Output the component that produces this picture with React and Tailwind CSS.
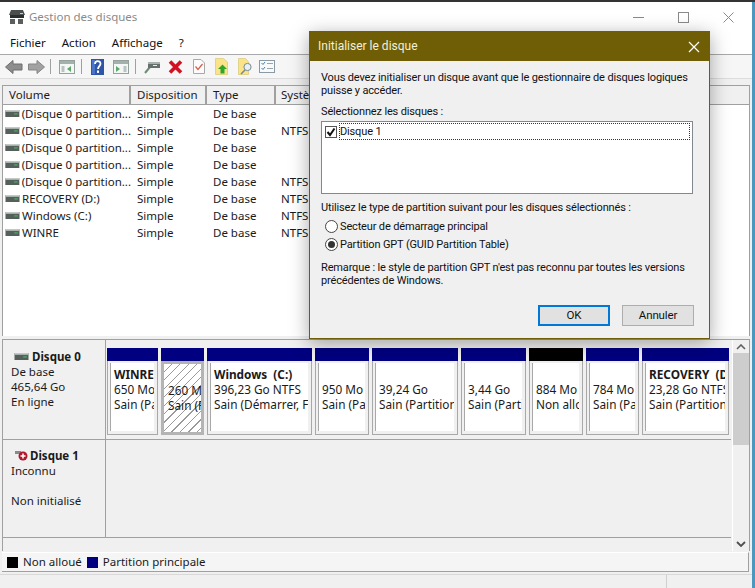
const rows = [
  ["(Disque 0 partition...", ""],
  ["(Disque 0 partition...", "NTFS"],
  ["(Disque 0 partition...", ""],
  ["(Disque 0 partition...", ""],
  ["(Disque 0 partition...", "NTFS"],
  ["RECOVERY (D:)", "NTFS"],
  ["Windows (C:)", "NTFS"],
  ["WINRE", "NTFS"],
];

const partitions = [
  { w: "w-[51px]", name: "WINRE", size: "650 Mo", state: "Sain (Pa" },
  { w: "w-[43px]", size: "260 Mo", state: "Sain (P", hatch: true },
  { w: "w-[105px]", name: "Windows  (C:)", size: "396,23 Go NTFS", state: "Sain (Démarrer, Fi" },
  { w: "w-[54px]", size: "950 Mo", state: "Sain (Pa" },
  { w: "w-[86px]", size: "39,24 Go", state: "Sain (Partition" },
  { w: "w-[65px]", size: "3,44 Go", state: "Sain (Parti" },
  { w: "w-[54px]", size: "884 Mo", state: "Non allo", black: true },
  { w: "w-[53px]", size: "784 Mo", state: "Sain (Pa" },
  { w: "w-[87px]", name: "RECOVERY  (D", size: "23,28 Go NTFS", state: "Sain (Partition" },
];

function DiskIcon({ className = "" }) {
  return (
    <svg width="15" height="7" viewBox="0 0 16 8" className={className}>
      <rect x="0" y="0" width="16" height="8" fill="#55605c" />
      <rect x="0" y="0" width="16" height="2" fill="#c4cac7" />
      <rect x="10" y="4" width="4" height="1" fill="#46d060" />
    </svg>
  );
}

function Toolbar() {
  return (
    <>
      <div className="h-[24px] flex items-center border-t border-[#a9a9a9] bg-[#f6f6f6] shrink-0">
        <svg width="40" height="16" viewBox="0 0 40 16" className="ml-[5px]">
          <path d="M0.5 8 L8 1.5 V5 H17 V11 H8 V14.5 Z" fill="#8d8d8d" stroke="#6d6d6d" />
          <path d="M39.5 8 L32 1.5 V5 H23.5 V11 H32 V14.5 Z" fill="#a2a2a2" stroke="#858585" />
        </svg>
        <div className="w-px h-[15px] bg-[#a0a0a0] ml-[5px]" />
        <svg width="16" height="14" viewBox="0 0 16 14" className="ml-[8px]">
          <rect x="0.5" y="0.5" width="15" height="13" fill="#f4f7f5" stroke="#93a09b" />
          <rect x="1" y="1" width="14" height="3" fill="#a4b0ab" />
          <path d="M2.5 6h3v6h-3z" fill="#b8c4c0" />
          <path d="M12 6v6l-4-3z" fill="#5aa86a" />
        </svg>
        <div className="w-px h-[15px] bg-[#a0a0a0] ml-[6px]" />
        <svg width="13" height="16" viewBox="0 0 13 16" className="ml-[9px]">
          <rect width="13" height="16" fill="#2f55a8" />
          <rect x="1" y="1" width="3" height="14" fill="#4a74c8" />
          <path d="M4 5 C4 1.2 9.5 1.2 9.5 4.8 C9.5 7 7 7.4 7 10" fill="none" stroke="#fff" strokeWidth="1.8" />
          <rect x="6" y="11.5" width="2" height="2.4" fill="#fff" />
        </svg>
        <svg width="16" height="14" viewBox="0 0 16 14" className="ml-[9px]">
          <rect x="0.5" y="0.5" width="15" height="13" fill="#f4f7f5" stroke="#93a09b" />
          <rect x="1" y="1" width="14" height="3" fill="#a4b0ab" />
          <path d="M3 6v6l4-3z" fill="#5aa86a" />
          <path d="M10.5 6h3v6h-3z" fill="#b8c4c0" />
        </svg>
        <div className="w-px h-[15px] bg-[#a0a0a0] ml-[6px]" />
        <svg width="16" height="15" viewBox="0 0 16 15" className="ml-[8px]">
          <path d="M1 14 L6 8" stroke="#6f8c78" strokeWidth="2" />
          <rect x="4" y="3" width="12" height="6" fill="#66706c" />
          <rect x="4" y="3" width="12" height="2" fill="#a9b3af" />
          <rect x="9" y="6" width="4" height="1" fill="#e8f0ec" />
        </svg>
        <svg width="15" height="14" viewBox="0 0 15 14" className="ml-[8px]">
          <path d="M2 1.5 L13 12.5 M13 1.5 L2 12.5" stroke="#cf1322" strokeWidth="3.6" />
        </svg>
        <svg width="12" height="15" viewBox="0 0 12 15" className="ml-[10px]">
          <path d="M0.5 0.5 H8 L11.5 4 V14.5 H0.5 Z" fill="#fbfbfb" stroke="#a8a8a8" />
          <path d="M2.5 7.5 L5 10.5 L9.5 5" fill="none" stroke="#d9594c" strokeWidth="1.2" />
        </svg>
        <svg width="13" height="17" viewBox="0 0 13 17" className="ml-[10px]">
          <path d="M0.5 0.5 H8.5 L12.5 4 V16.5 H0.5 Z" fill="#fbe38a" stroke="#e2d38a" />
          <path d="M7.5 6.5 L12 11 H9.5 V15.5 H5.5 V11 H3 Z" fill="#2fa52b" />
        </svg>
        <svg width="14" height="17" viewBox="0 0 14 17" className="ml-[10px]">
          <path d="M0.5 0.5 H7.5 L10.5 4 V16.5 H0.5 Z" fill="#fbe38a" stroke="#e2d38a" />
          <circle cx="9.5" cy="9" r="3.6" fill="#e6f1f5" stroke="#7a8a90" />
          <path d="M7 12 L3 16" stroke="#7a8a90" strokeWidth="1.6" />
        </svg>
        <svg width="16" height="13" viewBox="0 0 16 13" className="ml-[7px]">
          <rect x="0.5" y="0.5" width="15" height="12" fill="#f8fafa" stroke="#8a9aa4" />
          <path d="M2.5 3 L4 4.5 L6 2 M2.5 8 L4 9.5 L6 7" fill="none" stroke="#3f7fbf" />
          <path d="M8 3.5h6M8 8.5h6" stroke="#9aa4aa" />
        </svg>
      </div>
      <div className="h-[7px] shrink-0 bg-[#f0f0f0] border-t border-[#dcdcdc]" />
    </>
  );
}

function Dialog() {
  return (
    <div className="absolute left-[309px] top-[31px] w-[401px] h-[308px] flex flex-col bg-[#f0f0f0] border border-[#6f5e05] shadow-[0_4px_18px_rgba(0,0,0,0.35)] font-['Roboto',sans-serif] text-[11px] tracking-[-0.15px] leading-[13px] text-[#111]">
      <div className="h-[30px] shrink-0 -mx-px -mt-px pt-px bg-[#6f5e05] flex items-center justify-between pl-[9px] pr-[10px] text-[12px] tracking-normal text-[#f3efdc]">
        <span>Initialiser le disque</span>
        <svg width="12" height="12" viewBox="0 0 12 12">
          <path d="M1 1 L11 11 M11 1 L1 11" stroke="#fff" strokeWidth="1.2" />
        </svg>
      </div>
      <div className="flex-1 flex flex-col px-[11px] pt-[10px]">
        <p className="w-[372px]">Vous devez initialiser un disque avant que le gestionnaire de disques logiques puisse y accéder.</p>
        <p className="mt-[8px]">Sélectionnez les disques :</p>
        <div className="mt-[3px] w-[372px] h-[73px] bg-white border border-[#828790] p-px">
          <div className="flex items-center h-[17px]">
            <span className="w-[12px] h-[12px] ml-[2px] border border-[#555] flex items-center justify-center shrink-0">
              <svg width="10" height="10" viewBox="0 0 10 10">
                <path d="M1.5 5 L4 8 L8.5 1.5" fill="none" stroke="#111" strokeWidth="2" />
              </svg>
            </span>
            <span className="flex-1 h-[17px] ml-[2px] mr-px border border-dotted border-[#333] flex items-center">Disque 1</span>
          </div>
        </div>
        <p className="mt-[7px]">Utilisez le type de partition suivant pour les disques sélectionnés :</p>
        <label className="mt-[3px] h-[18px] flex items-center gap-[2px] ml-[4px]">
          <span className="w-[13px] h-[13px] rounded-full border border-[#444] bg-white" />
          Secteur de démarrage principal
        </label>
        <label className="h-[18px] flex items-center gap-[2px] ml-[4px]">
          <span className="w-[13px] h-[13px] rounded-full border border-[#444] bg-white flex items-center justify-center">
            <span className="w-[7px] h-[7px] rounded-full bg-[#333]" />
          </span>
          Partition GPT (GUID Partition Table)
        </label>
        <p className="mt-[8px] w-[372px]">Remarque : le style de partition GPT n'est pas reconnu par toutes les versions précédentes de Windows.</p>
        <div className="mt-[18px] flex justify-end gap-[12px] pr-[4px]">
          <button className="w-[72px] h-[21px] bg-[#e1e1e1] border-2 border-[#0078d7] text-[11.5px]">OK</button>
          <button className="w-[72px] h-[21px] bg-[#e1e1e1] border border-[#adadad] text-[11.5px]">Annuler</button>
        </div>
      </div>
    </div>
  );
}

function PartitionCell({ p }) {
  return (
    <div className={`${p.w} shrink-0 flex flex-col`}>
      <div className={`h-[13px] ${p.black ? "bg-black" : "bg-[#000080]"}`} />
      <div className={`flex-1 min-h-0 ${p.hatch ? "border-[3px] border-[#b4b4b4] bg-[repeating-linear-gradient(135deg,#fff_0,#fff_5px,#9a9a9a_5px,#9a9a9a_6px)]" : "border border-[#a8a8a8] border-t-0 pl-[2px] pr-[3px] pt-[2px] pb-[3px] bg-[#f0f0f0]"}`}>
        <div className={`h-full overflow-hidden whitespace-pre text-[11.8px] leading-[15px] ${p.hatch ? "pl-[4px] pt-[4px]" : "pl-[3px] pt-[4px] bg-white border-l border-[#a8a8a8]"}`}>
          <div className="h-[15px] font-bold">{p.name}</div>
          <div>{p.size}</div>
          <div>{p.state}</div>
        </div>
      </div>
    </div>
  );
}

export default function App() {
  return (
    <div className="relative w-[755px] h-[588px] overflow-hidden bg-[#4a97bf] font-['Noto_Sans',sans-serif] text-[11.5px] text-[#1a1a1a]">
      <div className="h-[2px] bg-[#333]" />
      <div className="w-[752px] h-[586px] bg-[#f0f0f0] flex flex-col">
        {/* title bar */}
        <div className="h-[30px] shrink-0 bg-white flex items-center pl-[9px] text-[#8a8a8a]">
          <svg width="16" height="14" viewBox="0 0 16 14">
            <path d="M2 0 H14 L16 5 H0 Z" fill="#4a4f4d" />
            <rect x="1" y="5" width="14" height="3" fill="#2b2f2e" />
            <rect x="11" y="3" width="3" height="1" fill="#8ff0a0" />
            <rect x="1" y="9" width="5" height="5" fill="#5a5f5d" />
            <rect x="9" y="9" width="5" height="5" fill="#5a5f5d" />
          </svg>
          <span className="ml-[4px]">Gestion des disques</span>
          <div className="ml-auto flex items-center gap-[34px] pr-[18px]">
            <svg width="11" height="11" viewBox="0 0 11 11">
              <path d="M0 5.5 H11" stroke="#8a8a8a" />
            </svg>
            <svg width="11" height="11" viewBox="0 0 11 11">
              <rect x="0.5" y="0.5" width="10" height="10" fill="none" stroke="#8a8a8a" />
            </svg>
            <svg width="11" height="11" viewBox="0 0 11 11">
              <path d="M0.5 0.5 L10.5 10.5 M10.5 0.5 L0.5 10.5" stroke="#8a8a8a" />
            </svg>
          </div>
        </div>
        {/* menu */}
        <div className="h-[22px] shrink-0 bg-white flex items-center gap-[16px] pl-[10px] text-[#111]">
          <span>Fichier</span>
          <span>Action</span>
          <span>Affichage</span>
          <span>?</span>
        </div>
        <Toolbar />
        {/* volume list */}
        <div className="h-[251px] shrink-0 mx-[2px] bg-white border-x border-[#a0a0a0] flex flex-col">
          <div className="h-[20px] shrink-0 flex bg-[#f0f0f0] border-y border-[#a0a0a0]">
            <div className="w-[128px] pl-[6px] border-r-2 border-[#a0a0a0]">Volume</div>
            <div className="w-[76px] pl-[6px] border-r-2 border-[#a0a0a0]">Disposition</div>
            <div className="w-[69px] pl-[6px] border-r-2 border-[#a0a0a0]">Type</div>
            <div className="pl-[5px]">Système</div>
          </div>
          {rows.map((r, i) => (
            <div key={i} className="h-[17px] flex items-center whitespace-nowrap">
              <div className="w-[128px] flex items-center pl-[2px] gap-[2px]">
                <DiskIcon />
                <span>{r[0]}</span>
              </div>
              <div className="w-[76px] pl-[6px]">Simple</div>
              <div className="w-[69px] pl-[6px]">De base</div>
              <div className="pl-[5px]">{r[1]}</div>
            </div>
          ))}
        </div>
        {/* splitter */}
        <div className="h-[3px] shrink-0" />
        {/* disk area */}
        <div className="mx-[2px] h-[212px] shrink-0 border-x border-t border-[#a0a0a0] flex">
          <div className="w-[730px] flex flex-col">
            <div className="h-[100px] shrink-0 flex border-b border-[#a0a0a0]">
              <div className="w-[103px] shrink-0 pl-[8px] pt-[9px] border-r border-[#a0a0a0] leading-[15px]">
                <div className="flex items-center gap-[3px] font-bold">
                  <DiskIcon className="ml-[3px]" />
                  Disque 0
                </div>
                <div>De base</div>
                <div>465,64 Go</div>
                <div>En ligne</div>
              </div>
              <div className="flex-1 min-w-0 flex pt-[8px] pb-[4px] pl-px gap-[3px] overflow-hidden">
                {partitions.map((p, i) => <PartitionCell key={i} p={p} />)}
              </div>
            </div>
            <div className="h-[98px] shrink-0 flex border-b border-[#a0a0a0]">
              <div className="w-[103px] shrink-0 pl-[8px] pt-[8px] border-r border-[#a0a0a0] leading-[15px]">
                <div className="flex items-center gap-[2px] font-bold">
                  <svg width="13" height="11" viewBox="0 0 13 11" className="ml-[4px]">
                    <rect x="0" y="1" width="6" height="3" fill="#8a8a8a" />
                    <circle cx="8" cy="6" r="4.5" fill="#b0182e" />
                    <path d="M8 3.5v5M5.5 6h5" stroke="#fff" strokeWidth="1.5" />
                  </svg>
                  Disque 1
                </div>
                <div>Inconnu</div>
                <div className="mt-[15px]">Non initialisé</div>
              </div>
              <div className="flex-1" />
            </div>
          </div>
          {/* scrollbar */}
          <div className="w-[17px] ml-[1px] flex flex-col items-center bg-[#f0f0f0] border-l border-white">
            <svg width="10" height="6" viewBox="0 0 10 6" className="mt-[4px] shrink-0">
              <path d="M1 5 L5 1 L9 5" fill="none" stroke="#606060" strokeWidth="1.6" />
            </svg>
            <div className="w-full h-[92px] mt-[3px] bg-[#cdcdcd] shrink-0" />
            <div className="flex-1" />
            <svg width="10" height="6" viewBox="0 0 10 6" className="mb-[4px] shrink-0">
              <path d="M1 1 L5 5 L9 1" fill="none" stroke="#505050" strokeWidth="1.8" />
            </svg>
          </div>
        </div>
        {/* legend */}
        <div className="mx-[2px] h-[20px] shrink-0 mt-px w-[747px] border-r border-b border-t border-t-white border-[#a0a0a0] bg-[#f5f5f5] flex items-center pl-[5px]">
          <span className="w-[11px] h-[11px] bg-black" />
          <span className="ml-[5px]">Non alloué</span>
          <span className="ml-[5px] w-[11px] h-[11px] bg-[#000080]" />
          <span className="ml-[5px]">Partition principale</span>
        </div>
        {/* status bar */}
        <div className="flex-1 flex justify-end mt-[2px] border-t border-[#d8d8d8]">
          <div className="w-[86px] border-l border-[#d0d0d0]" />
        </div>
      </div>
      <Dialog />
    </div>
  );
}
